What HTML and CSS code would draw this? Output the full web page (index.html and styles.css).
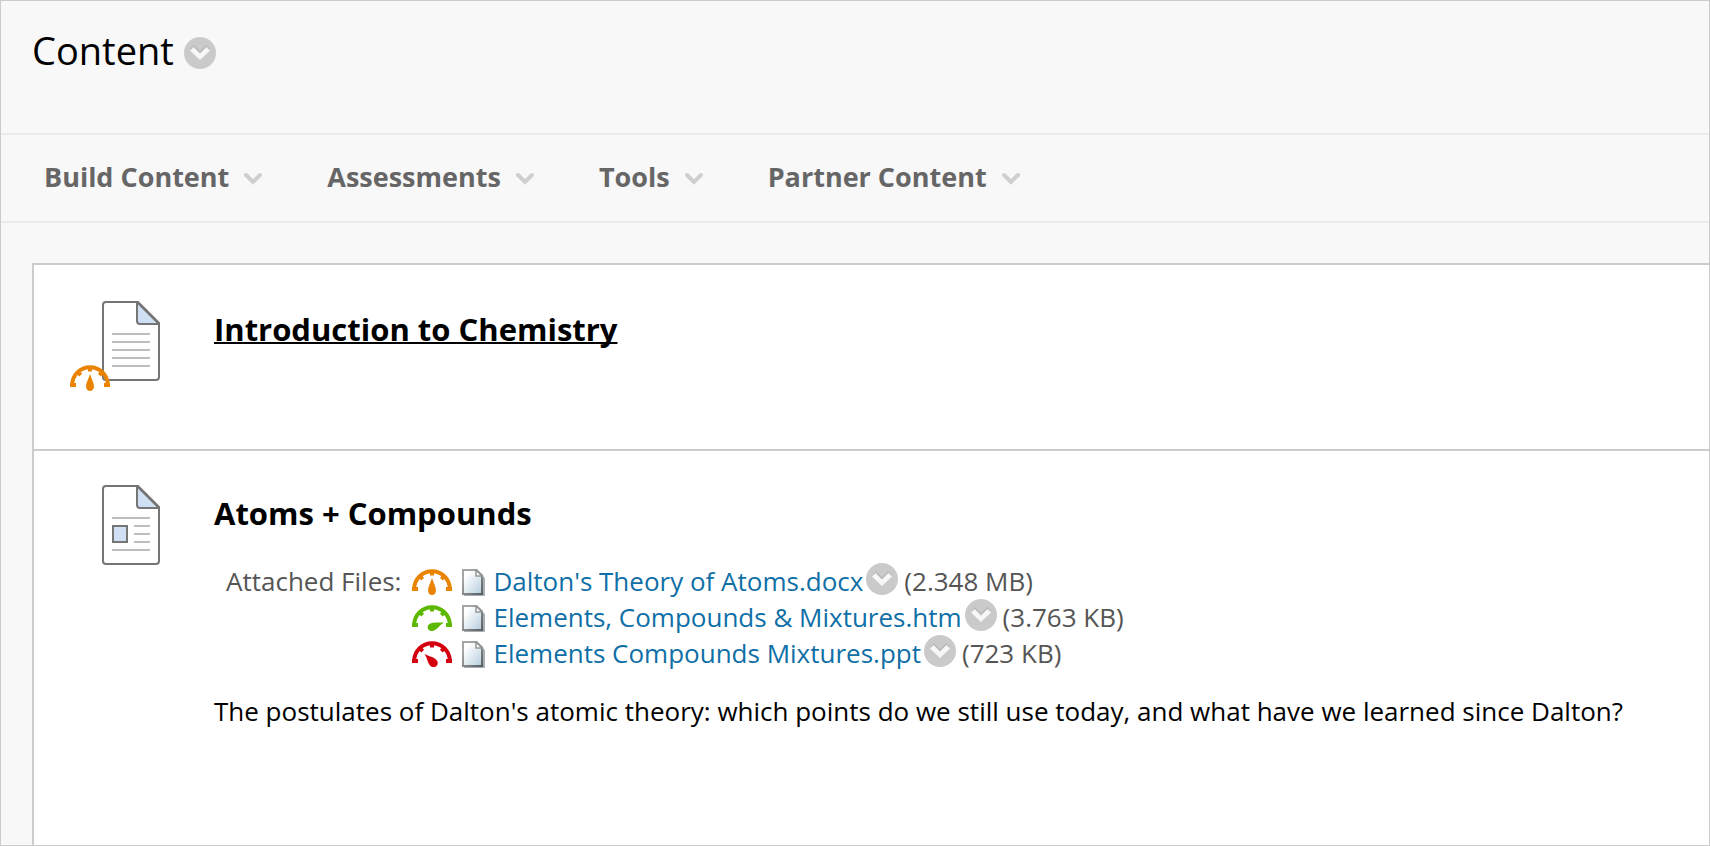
FILE: index.html
```html
<!DOCTYPE html>
<html lang="en">
<head>
<meta charset="utf-8">
<title>Content</title>
<link rel="stylesheet" href="styles.css">
</head>
<body>
<svg class="defs" aria-hidden="true">
  <defs>
    <linearGradient id="paper" x1="0" y1="0" x2="1" y2="1">
      <stop offset="0.2" stop-color="#ffffff"/>
      <stop offset="1" stop-color="#b4cddd"/>
    </linearGradient>
    <linearGradient id="edge" x1="0" y1="0" x2="1" y2="1">
      <stop offset="0.2" stop-color="#a6a6a6"/>
      <stop offset="1" stop-color="#5c6063"/>
    </linearGradient>
    <symbol id="chevron-circle" viewBox="0 0 32 32">
      <circle cx="16" cy="16" r="16" fill="#cacaca"/>
      <path d="M6 12l4-4 6 6 6-6 4 4-10 8z" fill="#bababa"/>
      <path d="M6 13.500l3.500-3.500 6.500 6.500 6.500-6.500 3.500 3.500-10 9.500z" fill="#f7f7f7"/>
    </symbol>
    <symbol id="chevron" viewBox="0 0 20 14">
      <path d="M3 3l7 7 7-7" fill="none" stroke="#cfcfcf" stroke-width="4" stroke-linecap="round"/>
    </symbol>
    <symbol id="dial" viewBox="0 0 40 26">
      <path d="M2.200 22v-2a17.800 17.800 0 0 1 35.600 0v2" fill="none" stroke="currentColor" stroke-width="4"/>
      <path d="M0 18h6v4H0zM34 18h6v4h-6zM18 2h4v4.500h-4z" fill="currentColor"/>
      <path d="M7.500 7l3.200 3.200M32.500 7l-3.200 3.200" stroke="currentColor" stroke-width="4"/>
    </symbol>
    <symbol id="needle" viewBox="0 0 40 26">
      <path d="M20 9c1.500 5 4 8.500 4 12.500a4 4.500 0 0 1-8 0c0-4 2.500-7.500 4-12.500z" fill="currentColor"/>
    </symbol>
    <symbol id="needle-high" viewBox="0 0 40 26">
      <path d="M32 17.500c-5 .2-11-.8-14.500 1.500a3.800 3.800 0 0 0 2.500 7c4.500 0 7-5.500 12-8.500z" fill="currentColor"/>
    </symbol>
    <symbol id="needle-low" viewBox="0 0 40 26">
      <path d="M12.500 13c4.500 2.500 9.500 2.800 12 6a4.200 4.200 0 0 1-6 6c-3-2.800-2.800-7.500-6-12z" fill="currentColor"/>
    </symbol>
    <symbol id="page" viewBox="0 0 58 80">
      <path d="M4 1h32l21 21v54a3 3 0 0 1-3 3H4a3 3 0 0 1-3-3V4a3 3 0 0 1 3-3z" fill="#fff" stroke="#757575" stroke-width="2"/>
      <path d="M35 1v19a3 3 0 0 0 3 3h19z" fill="#cfe0f5" stroke="#757575" stroke-width="2" stroke-linejoin="round"/>
    </symbol>
    <symbol id="file" viewBox="0 0 24 28">
      <path d="M2 4h15l6 5v18H2z" fill="#8b969d" opacity=".75"/>
      <path d="M1 1h13.500L20 6.500V25H1z" fill="url(#paper)" stroke="url(#edge)" stroke-width="2"/>
      <path d="M14 1v6h6z" fill="#fff" stroke="#969696" stroke-width="1.500"/>
    </symbol>
  </defs>
</svg>

<header class="page-header">
  <h1 class="page-title">Content</h1>
  <button class="round-button" type="button" aria-label="Content options"><svg class="icon-round"><use href="#chevron-circle"/></svg></button>
</header>

<nav class="action-bar" aria-label="Actions">
  <button class="menu" type="button">Build Content <svg class="icon-chevron"><use href="#chevron"/></svg></button>
  <button class="menu" type="button">Assessments <svg class="icon-chevron"><use href="#chevron"/></svg></button>
  <button class="menu" type="button">Tools <svg class="icon-chevron"><use href="#chevron"/></svg></button>
  <button class="menu" type="button">Partner Content <svg class="icon-chevron"><use href="#chevron"/></svg></button>
</nav>

<main class="content-list">
  <article class="item">
    <div class="item-icon">
      <svg class="icon-page" viewBox="0 0 58 80"><use href="#page"/><path d="M10 33h38M10 41h38M10 49h38M10 57h38M10 65h38" stroke="#bdbdbd" stroke-width="2"/></svg>
      <button class="gauge-button gauge-badge gauge-medium" type="button" aria-label="Accessibility score: medium"><svg class="icon-gauge"><use href="#dial"/><use href="#needle"/></svg></button>
    </div>
    <div class="item-body">
      <h2 class="item-title"><a class="title-link" href="#chemistry">Introduction to Chemistry</a></h2>
    </div>
  </article>
  <article class="item">
    <div class="item-icon">
      <svg class="icon-page" viewBox="0 0 58 80"><use href="#page"/><path d="M10 33h38M32 41h16M32 49h16M32 57h16M10 65h38" stroke="#bdbdbd" stroke-width="2"/><path d="M11 41h14v16H11z" fill="#cfe0f5" stroke="#757575" stroke-width="2"/></svg>
    </div>
    <div class="item-body">
      <h2 class="item-title">Atoms + Compounds</h2>
      <div class="attachments">
        <span class="attachments-label" id="files-label">Attached Files:</span>
        <ul class="file-list" aria-labelledby="files-label">
          <li class="file">
            <button class="gauge-button gauge-medium" type="button" aria-label="Accessibility score: medium"><svg class="icon-gauge"><use href="#dial"/><use href="#needle"/></svg></button>
            <svg class="icon-file"><use href="#file"/></svg>
            <a class="file-link" href="#docx">Dalton's Theory of Atoms.docx</a>
            <button class="round-button" type="button" aria-label="File options"><svg class="icon-round"><use href="#chevron-circle"/></svg></button>
            <span class="file-size">(2.348 MB)</span>
          </li>
          <li class="file">
            <button class="gauge-button gauge-high" type="button" aria-label="Accessibility score: high"><svg class="icon-gauge"><use href="#dial"/><use href="#needle-high"/></svg></button>
            <svg class="icon-file"><use href="#file"/></svg>
            <a class="file-link" href="#htm">Elements, Compounds &amp; Mixtures.htm</a>
            <button class="round-button" type="button" aria-label="File options"><svg class="icon-round"><use href="#chevron-circle"/></svg></button>
            <span class="file-size">(3.763 KB)</span>
          </li>
          <li class="file">
            <button class="gauge-button gauge-low" type="button" aria-label="Accessibility score: low"><svg class="icon-gauge"><use href="#dial"/><use href="#needle-low"/></svg></button>
            <svg class="icon-file"><use href="#file"/></svg>
            <a class="file-link" href="#ppt">Elements Compounds Mixtures.ppt</a>
            <button class="round-button" type="button" aria-label="File options"><svg class="icon-round"><use href="#chevron-circle"/></svg></button>
            <span class="file-size">(723 KB)</span>
          </li>
        </ul>
      </div>
      <p class="description">The postulates of Dalton's atomic theory: which points do we still use today, and what have we learned since Dalton?</p>
    </div>
  </article>
</main>
</body>
</html>
```

FILE: styles.css
```css
* {
  box-sizing: border-box;
}

body {
  display: flex;
  flex-direction: column;
  min-height: 100vh;
  margin: 0;
  border: 1px solid #ccc;
  background: #f8f8f8;
  color: #000;
  font: 26px/36px "Open Sans", "Noto Sans", sans-serif;
}

button {
  margin: 0;
  padding: 0;
  border: 0;
  background: none;
  font: inherit;
  cursor: pointer;
}

svg {
  display: block;
  flex: none;
}

.defs {
  position: absolute;
  width: 0;
  height: 0;
}

.page-header {
  display: flex;
  align-items: center;
  gap: 10px;
  padding: 24px 31px 52px;
}

.page-title {
  margin: 0;
  padding-bottom: 6px;
  font-size: 38px;
  font-weight: 400;
  line-height: 50px;
}

.round-button {
  flex: none;
}

.icon-round {
  width: 32px;
  height: 32px;
}

.action-bar {
  display: flex;
  gap: 64px;
  padding: 23px 43px 25px;
  border-top: 2px solid #eaeaea;
  border-bottom: 2px solid #eaeaea;
}

.menu {
  display: flex;
  align-items: center;
  gap: 14px;
  color: #666;
  font-size: 27px;
  font-weight: 700;
  line-height: 38px;
}

.icon-chevron {
  width: 20px;
  height: 14px;
  margin-top: 4px;
}

.content-list {
  flex: 1;
  margin: 40px 0 0 31px;
  border-top: 2px solid #ccc;
  border-left: 2px solid #ccc;
  background: #fff;
}

.item {
  display: flex;
  gap: 54px;
  min-height: 184px;
  padding: 36px 32px 36px 36px;
}

.item + .item {
  padding-top: 34px;
  border-top: 2px solid #ccc;
}

.item-icon {
  position: relative;
  flex: none;
  padding-left: 32px;
}

.icon-page {
  width: 58px;
  height: 80px;
}

.icon-gauge {
  width: 40px;
  height: 26px;
}

.gauge-badge {
  position: absolute;
  top: 64px;
  left: 0;
}

.gauge-medium {
  color: #e98300;
}

.gauge-high {
  color: #5cb800;
}

.gauge-low {
  color: #d4000f;
}

.item-body {
  flex: 1;
  padding-top: 6px;
}

.item-title {
  margin: 0;
  font-size: 31px;
  line-height: 44px;
}

.title-link {
  color: inherit;
  text-decoration-thickness: 2px;
  text-decoration-skip-ink: none;
}

.attachments {
  display: flex;
  gap: 11px;
  padding: 28px 12px 22px;
  color: #555;
}

.file-list {
  margin: 0;
  padding: 0;
  list-style: none;
}

.file {
  display: flex;
  align-items: center;
  height: 36px;
}

.file .gauge-button {
  margin: 2px 10px 0 0;
}

.icon-file {
  width: 24px;
  height: 28px;
  margin: 4px 7px 0 0;
}

.file-link {
  color: #0f6fa6;
  text-decoration: none;
}

.file .round-button {
  margin: 0 6px 4px 3px;
}

.description {
  margin: 0;
}
```
